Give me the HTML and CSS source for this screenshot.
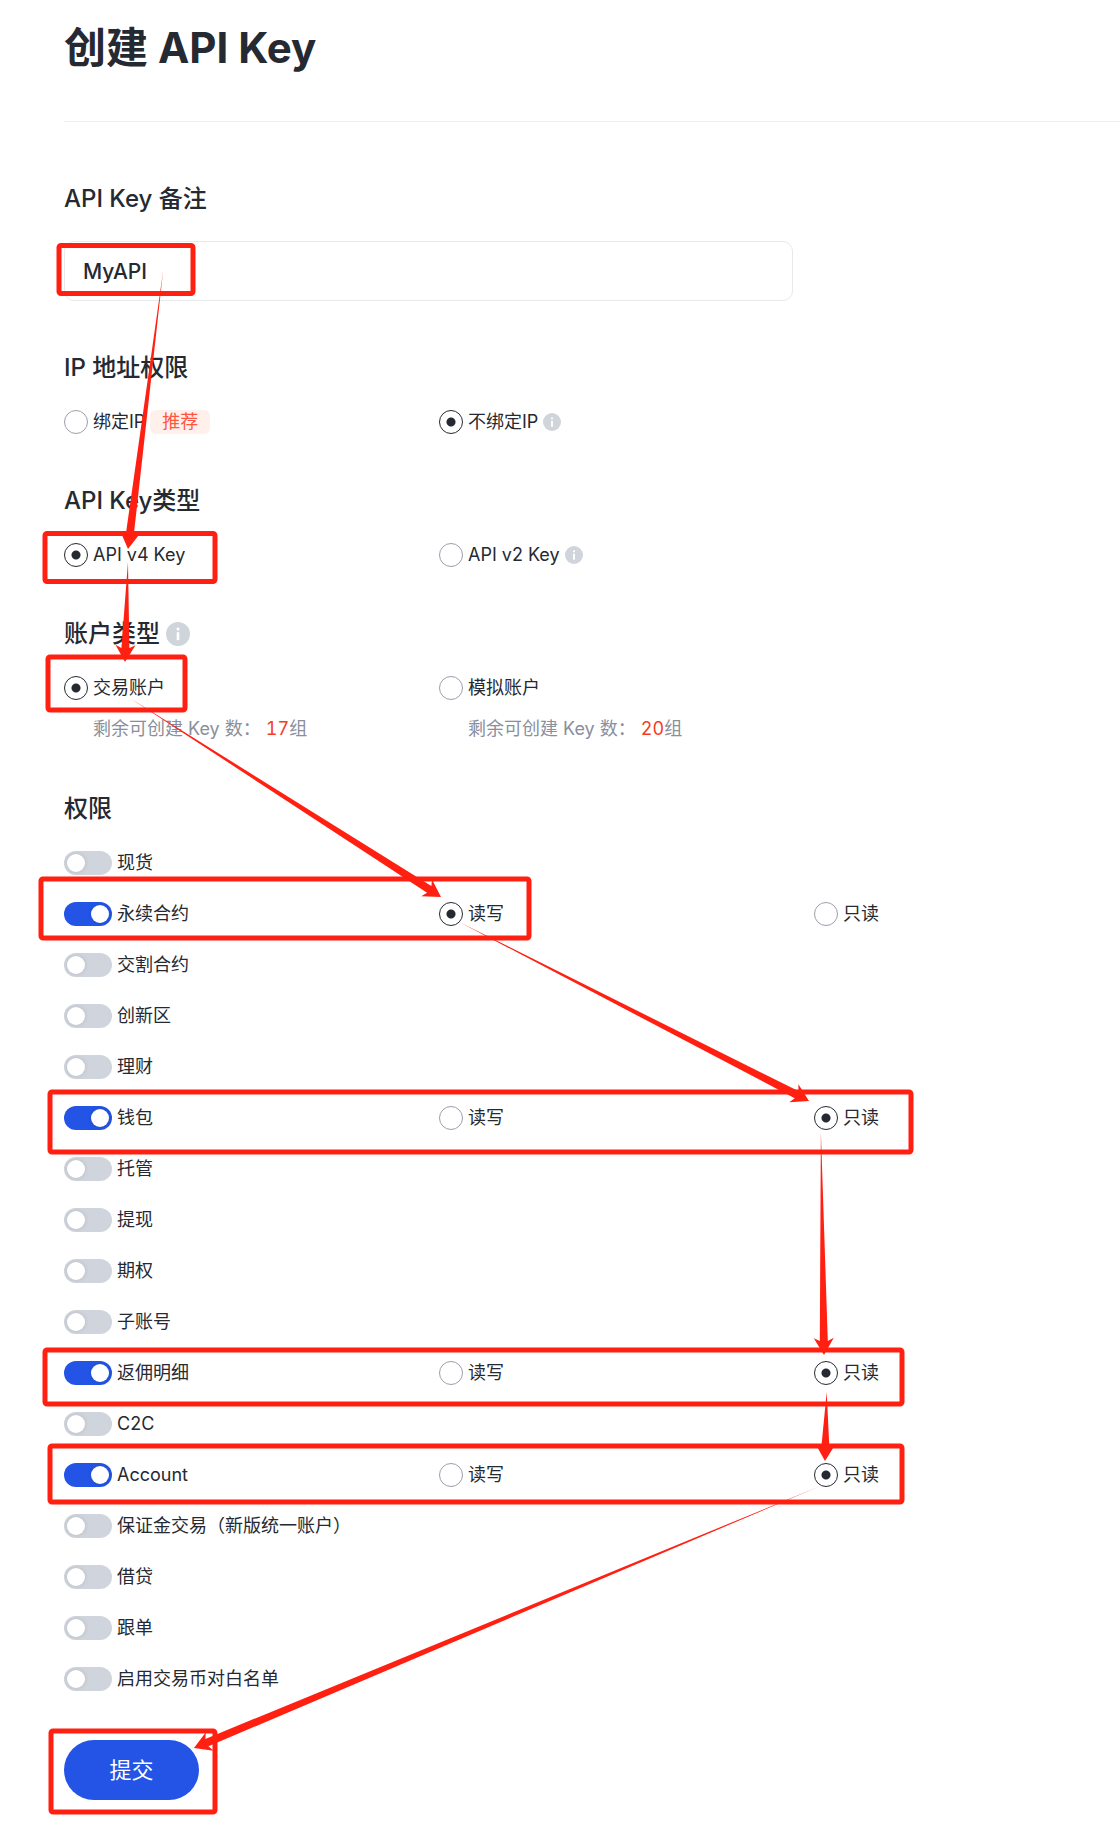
FILE: index.html
```html
<!DOCTYPE html>
<html lang="zh-CN">
<head>
<meta charset="utf-8">
<meta name="viewport" content="width=device-width, initial-scale=1">
<title>创建 API Key</title>
<link rel="stylesheet" href="styles.css">
</head>
<body>
<svg class="defs" aria-hidden="true">
  <symbol id="info" viewBox="0 0 24 24">
    <circle cx="12" cy="12" r="12" fill="#d0d4db"/>
    <circle cx="12" cy="7" r="1.5" fill="#fff"/>
    <path d="M10.7 10.2h2.6v8h-2.6z" fill="#fff"/>
  </symbol>
</svg>
<main class="page">
  <header class="page-header"><h1 class="title">创建 API Key</h1></header>
  <form class="form">
    <section class="section">
      <label class="heading" for="note">API Key 备注</label>
      <input class="text-input" id="note" type="text" value="MyAPI">
    </section>

    <section class="section" role="radiogroup" aria-labelledby="h-ip">
      <h2 class="heading" id="h-ip">IP 地址权限</h2>
      <div class="columns">
        <div class="option"><input class="radio" type="radio" name="ip" id="ip-bind"><label for="ip-bind">绑定IP</label><span class="badge">推荐</span></div>
        <div class="option"><input class="radio" type="radio" name="ip" id="ip-free" checked><label for="ip-free">不绑定IP</label><svg class="info" aria-hidden="true"><use href="#info"/></svg></div>
      </div>
    </section>

    <section class="section" role="radiogroup" aria-labelledby="h-type">
      <h2 class="heading" id="h-type">API Key类型</h2>
      <div class="columns">
        <div class="option"><input class="radio" type="radio" name="type" id="v4" checked><label for="v4">API v4 Key</label></div>
        <div class="option"><input class="radio" type="radio" name="type" id="v2"><label for="v2">API v2 Key</label><svg class="info" aria-hidden="true"><use href="#info"/></svg></div>
      </div>
    </section>

    <section class="section" role="radiogroup" aria-labelledby="h-account">
      <h2 class="heading" id="h-account">账户类型<svg class="info info-large" aria-hidden="true"><use href="#info"/></svg></h2>
      <div class="columns">
        <div>
          <div class="option"><input class="radio" type="radio" name="account" id="live" checked><label for="live">交易账户</label></div>
          <p class="quota">剩余可创建 Key 数： <span class="count">17</span>组</p>
        </div>
        <div>
          <div class="option"><input class="radio" type="radio" name="account" id="demo"><label for="demo">模拟账户</label></div>
          <p class="quota">剩余可创建 Key 数： <span class="count">20</span>组</p>
        </div>
      </div>
    </section>

    <section class="section">
      <h2 class="heading">权限</h2>
      <div class="permissions">
        <div class="columns"><div class="option"><input class="switch" type="checkbox" role="switch" id="p1"><label for="p1">现货</label></div></div>
        <div class="columns">
          <div class="option"><input class="switch" type="checkbox" role="switch" id="p2" checked><label for="p2">永续合约</label></div>
          <div class="option"><input class="radio" type="radio" name="m2" id="m2w" checked><label for="m2w">读写</label></div>
          <div class="option"><input class="radio" type="radio" name="m2" id="m2r"><label for="m2r">只读</label></div>
        </div>
        <div class="columns"><div class="option"><input class="switch" type="checkbox" role="switch" id="p3"><label for="p3">交割合约</label></div></div>
        <div class="columns"><div class="option"><input class="switch" type="checkbox" role="switch" id="p4"><label for="p4">创新区</label></div></div>
        <div class="columns"><div class="option"><input class="switch" type="checkbox" role="switch" id="p5"><label for="p5">理财</label></div></div>
        <div class="columns">
          <div class="option"><input class="switch" type="checkbox" role="switch" id="p6" checked><label for="p6">钱包</label></div>
          <div class="option"><input class="radio" type="radio" name="m6" id="m6w"><label for="m6w">读写</label></div>
          <div class="option"><input class="radio" type="radio" name="m6" id="m6r" checked><label for="m6r">只读</label></div>
        </div>
        <div class="columns"><div class="option"><input class="switch" type="checkbox" role="switch" id="p7"><label for="p7">托管</label></div></div>
        <div class="columns"><div class="option"><input class="switch" type="checkbox" role="switch" id="p8"><label for="p8">提现</label></div></div>
        <div class="columns"><div class="option"><input class="switch" type="checkbox" role="switch" id="p9"><label for="p9">期权</label></div></div>
        <div class="columns"><div class="option"><input class="switch" type="checkbox" role="switch" id="p10"><label for="p10">子账号</label></div></div>
        <div class="columns">
          <div class="option"><input class="switch" type="checkbox" role="switch" id="p11" checked><label for="p11">返佣明细</label></div>
          <div class="option"><input class="radio" type="radio" name="m11" id="m11w"><label for="m11w">读写</label></div>
          <div class="option"><input class="radio" type="radio" name="m11" id="m11r" checked><label for="m11r">只读</label></div>
        </div>
        <div class="columns"><div class="option"><input class="switch" type="checkbox" role="switch" id="p12"><label for="p12">C2C</label></div></div>
        <div class="columns">
          <div class="option"><input class="switch" type="checkbox" role="switch" id="p13" checked><label for="p13">Account</label></div>
          <div class="option"><input class="radio" type="radio" name="m13" id="m13w"><label for="m13w">读写</label></div>
          <div class="option"><input class="radio" type="radio" name="m13" id="m13r" checked><label for="m13r">只读</label></div>
        </div>
        <div class="columns"><div class="option"><input class="switch" type="checkbox" role="switch" id="p14"><label for="p14">保证金交易（新版统一账户）</label></div></div>
        <div class="columns"><div class="option"><input class="switch" type="checkbox" role="switch" id="p15"><label for="p15">借贷</label></div></div>
        <div class="columns"><div class="option"><input class="switch" type="checkbox" role="switch" id="p16"><label for="p16">跟单</label></div></div>
        <div class="columns"><div class="option"><input class="switch" type="checkbox" role="switch" id="p17"><label for="p17">启用交易币对白名单</label></div></div>
      </div>
    </section>

    <button class="submit" type="button">提交</button>
  </form>

  <!-- Walkthrough marks: boxes round each step, arrows from one step to the next -->
  <svg class="guide" width="1120" height="1822" viewBox="0 0 1120 1822" aria-hidden="true">
    <g fill="none" stroke="#ff2012" stroke-width="5">
      <rect x="59" y="245.5" width="134" height="48" rx="2"/>
      <rect x="45" y="533.5" width="170" height="48" rx="2"/>
      <rect x="48" y="657" width="137" height="53" rx="2"/>
      <rect x="41" y="879" width="488" height="59" rx="2"/>
      <rect x="50" y="1092" width="861" height="60" rx="2"/>
      <rect x="45" y="1350" width="857" height="54" rx="2"/>
      <rect x="50" y="1446" width="852" height="56" rx="2"/>
      <rect x="51" y="1731" width="164" height="81" rx="2"/>
    </g>
    <g fill="#ff2012">
      <path transform="translate(128 549) rotate(97.2)" d="M0 0-17-10-14-4-280 0-14 4-17 10z"/>
      <path transform="translate(125 662) rotate(91.7)" d="M0 0-17-10-14-4-100 0-14 4-17 10z"/>
      <path transform="translate(441 897) rotate(32.6)" d="M0 0-17-10-14-4-369 0-14 4-17 10z"/>
      <path transform="translate(809 1101) rotate(27.1)" d="M0 0-17-10-14-4-393 0-14 4-17 10z"/>
      <path transform="translate(824 1355) rotate(89.2)" d="M0 0-17-10-14-4-223 0-14 4-17 10z"/>
      <path transform="translate(825 1461) rotate(91.4)" d="M0 0-17-10-14-4-69 0-14 4-17 10z"/>
      <path transform="translate(194 1748) rotate(157.3)" d="M0 0-17-10-14-4-679 0-14 4-17 10z"/>
    </g>
  </svg>
</main>
</body>
</html>
```
FILE: styles.css
```css
* { box-sizing: border-box; }

body {
  margin: 0;
  background: #fff;
  color: #252932;
  font: 400 18px/24px Inter, "Noto Sans CJK SC", sans-serif;
}

h1, h2, p { margin: 0; }

.defs { display: none; }

.page {
  position: relative;
  padding: 18px 0 22px 64px;
}

.page-header {
  padding-bottom: 43px;
  border-bottom: 1px solid #eeeff1;
}

.title {
  font-size: 42px;
  line-height: 60px;
  font-weight: 700;
}

.form {
  display: flex;
  flex-direction: column;
  align-items: flex-start;
  gap: 49px;
  padding-top: 59px;
}

.section {
  display: flex;
  flex-direction: column;
  gap: 24px;
  width: 100%;
}

.heading {
  display: flex;
  align-items: center;
  gap: 6px;
  font-size: 24px;
  line-height: 36px;
  font-weight: 500;
  white-space: pre;
}

.text-input {
  width: 100%;
  max-width: 729px;
  height: 60px;
  padding: 0 18px;
  border: 1px solid #e8e9ed;
  border-radius: 10px;
  background: #fff;
  color: inherit;
  font: inherit;
  font-size: 21px;
  font-weight: 500;
}

.columns {
  display: grid;
  grid-template-columns: 375px 375px 1fr;
}

.permissions {
  display: grid;
  gap: 27px;
}

.option {
  display: flex;
  align-items: center;
  gap: 5px;
  height: 24px;
  white-space: nowrap;
}

.radio {
  appearance: none;
  flex: none;
  width: 24px;
  height: 24px;
  margin: 0;
  border: 1px solid #9b9fab;
  border-radius: 50%;
  background: #fff;
}

.radio:checked {
  border-color: #252932;
  background: radial-gradient(circle, #252932 4px, #fff 5px);
}

.switch {
  appearance: none;
  flex: none;
  width: 48px;
  height: 24px;
  margin: 0;
  padding: 3px;
  border-radius: 12px;
  background: #d0d4dc;
}

.switch::before {
  content: "";
  display: block;
  width: 18px;
  height: 18px;
  border-radius: 50%;
  background: #fff;
  box-shadow: 0 0 5px rgba(0, 0, 0, 0.12);
}

.switch:checked { background: #2354e6; }
.switch:checked::before { margin-left: auto; }

.badge {
  padding: 0 12px;
  border-radius: 6px;
  background: #fff0ec;
  color: #ff5440;
}

.info {
  width: 18px;
  height: 18px;
}

.info-large {
  width: 24px;
  height: 24px;
}

.quota {
  padding: 15px 0 0 29px;
  line-height: 27px;
  color: #8a8f9c;
}

.count {
  color: #f53d24;
  font-variant-numeric: tabular-nums;
}

.submit {
  width: 135px;
  height: 60px;
  padding: 0;
  border: 0;
  border-radius: 30px;
  background: #2354e6;
  color: #fff;
  font: inherit;
  font-size: 22px;
}

.guide {
  position: absolute;
  top: 0;
  left: 0;
  pointer-events: none;
}
```
